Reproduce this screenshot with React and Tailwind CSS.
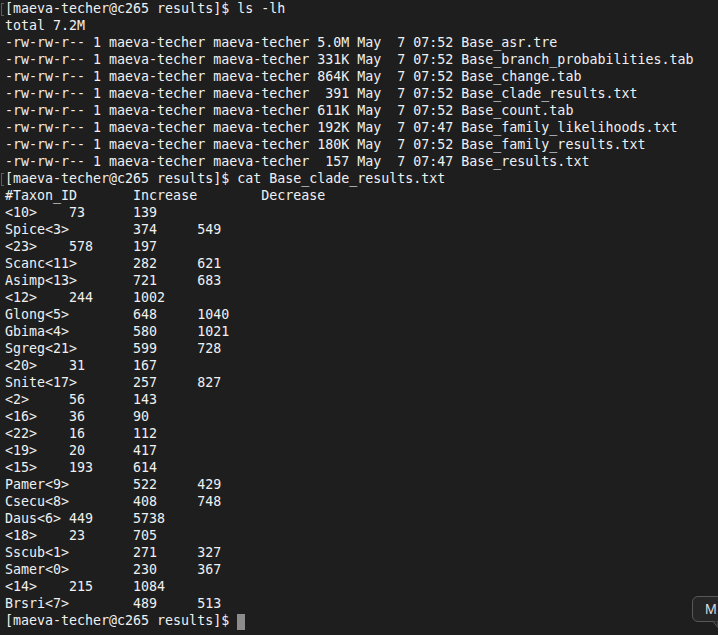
const files = [
  ["5.0M", "Base_asr.tre"],
  ["331K", "Base_branch_probabilities.tab"],
  ["864K", "Base_change.tab"],
  [" 391", "Base_clade_results.txt"],
  ["611K", "Base_count.tab"],
  ["192K", "Base_family_likelihoods.txt", "07:47"],
  ["180K", "Base_family_results.txt"],
  [" 157", "Base_results.txt", "07:47"],
];

// rows of the clade table, tab separated like the real file
const clades = [
  "<10>\t73\t139",
  "Spice<3>\t374\t549",
  "<23>\t578\t197",
  "Scanc<11>\t282\t621",
  "Asimp<13>\t721\t683",
  "<12>\t244\t1002",
  "Glong<5>\t648\t1040",
  "Gbima<4>\t580\t1021",
  "Sgreg<21>\t599\t728",
  "<20>\t31\t167",
  "Snite<17>\t257\t827",
  "<2>\t56\t143",
  "<16>\t36\t90",
  "<22>\t16\t112",
  "<19>\t20\t417",
  "<15>\t193\t614",
  "Pamer<9>\t522\t429",
  "Csecu<8>\t408\t748",
  "Daus<6>\t449\t5738",
  "<18>\t23\t705",
  "Sscub<1>\t271\t327",
  "Samer<0>\t230\t367",
  "<14>\t215\t1084",
  "Brsri<7>\t489\t513",
];

function Line({ children, mark }) {
  return (
    <div className="relative h-[17px] whitespace-pre leading-[17px] [tab-size:8]">
      {mark && (
        <span className="absolute left-[-4px] top-[3px] h-[13px] w-[3px] border-y border-l border-[#5e5e5e]" />
      )}
      {children}
    </div>
  );
}

export default function App() {
  return (
    <div
      className="relative h-[635px] w-[718px] overflow-hidden bg-[#1e1e1e] pl-[5px] text-[13.3px] text-[#f0f0f0]"
      style={{ fontFamily: '"DejaVu Sans Mono", "Liberation Mono", monospace' }}
    >
      <Line mark>[maeva-techer@c265 results]$ ls -lh</Line>
      <Line>total 7.2M</Line>
      {files.map(([size, name, time]) => (
        <Line key={name}>
          {`-rw-rw-r-- 1 maeva-techer maeva-techer ${size} May  7 ${time || "07:52"} ${name}`}
        </Line>
      ))}
      <Line mark>[maeva-techer@c265 results]$ cat Base_clade_results.txt</Line>
      <Line>{"#Taxon_ID\tIncrease\tDecrease"}</Line>
      {clades.map((row) => (
        <Line key={row}>{row}</Line>
      ))}
      <Line>
        [maeva-techer@c265 results]${" "}
        <span className="inline-block h-[16px] w-[8px] translate-y-[2px] bg-[#8c8c8c] align-top" />
      </Line>

      {/* little tooltip peeking in at the bottom right */}
      <div className="absolute left-[692px] top-[596px] h-[26px] w-[40px] rounded-[6px] border border-[#585858] bg-[#262626] pl-[12px] pt-[4px] text-[13px] leading-[17px] text-[#d8d8d8]" style={{ fontFamily: '"Inter", "Liberation Sans", sans-serif' }}>
        M
      </div>
      <svg className="absolute left-[709px] top-[620px]" width="12" height="9" viewBox="0 0 12 9">
        <path d="M0 1.5 L4 1.5 L9 7.5 L9 1.5 L12 1.5" fill="#262626" stroke="#585858" strokeWidth="1" />
        <path d="M1 0 L11 0 L11 1 L1 1 Z" fill="#262626" />
      </svg>
    </div>
  );
}
